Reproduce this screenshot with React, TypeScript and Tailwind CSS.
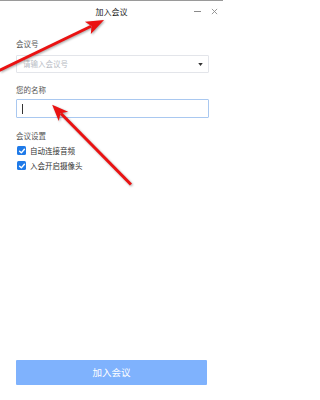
import React from 'react'

const FONT = { fontFamily: '"Noto Sans CJK SC", "Noto Sans", sans-serif' }

function CheckBox() {
  return (
    <span className="flex h-[9px] w-[9px] items-center justify-center rounded-[1.5px] bg-[#1f7ae8]">
      <svg viewBox="0 0 10 10" className="h-[8px] w-[8px]" fill="none" stroke="white" strokeWidth={1.8}>
        <path d="M2 5.2 4.2 7.3 8 2.8" strokeLinecap="round" strokeLinejoin="round" />
      </svg>
    </span>
  )
}

function Arrows() {
  return (
    <svg
      className="pointer-events-none absolute inset-0 h-full w-full drop-shadow-[1px_1px_1px_rgba(0,0,0,0.35)]"
      viewBox="0 0 223 400"
    >
      {/* arrow to the title */}
      <line x1={-6} y1={72} x2={91} y2={25.3} stroke="#ea1212" strokeWidth={3} />
      <polygon points="104,19 84.8,20.8 91.4,25.1 90.8,33" fill="#ea1212" />
      {/* arrow to the name field */}
      <line x1={131} y1={184} x2={60.8} y2={112.8} stroke="#ea1212" strokeWidth={3} />
      <polygon points="52,104 68,111 60.4,112.6 58.6,120.4" fill="#ea1212" />
    </svg>
  )
}

export default function App() {
  return (
    <div
      style={FONT}
      className="relative flex h-[400px] w-[223px] flex-col overflow-hidden border-t border-[#9a9a9a] bg-white"
    >
      {/* title bar */}
      <div className="grid h-[21px] grid-cols-[1fr_auto_1fr] items-center">
        <div />
        <span className="text-[8px] leading-none text-[#222]">加入会议</span>
        <div className="flex items-center justify-end gap-[10px] pr-[5px]">
          <span className="block h-px w-[7px] bg-[#8a8a8a]" />
          <svg viewBox="0 0 8 8" className="h-[7px] w-[7px]" stroke="#8a8a8a" strokeWidth={1}>
            <path d="M1 1 7 7M7 1 1 7" />
          </svg>
        </div>
      </div>

      <div className="flex flex-1 flex-col pl-[16px] pr-[14px]">
        <div className="mt-[17px] text-[7.5px] leading-[10px] text-[#555]">会议号</div>
        <div className="mt-[6px] flex h-[18px] items-center justify-between rounded-[1px] border border-[#e3e5ea] pl-[6px] pr-[5px]">
          <span className="text-[7.5px] text-[#b8bcc4]">请输入会议号</span>
          <svg viewBox="0 0 6 4" className="h-[3px] w-[5px]">
            <path d="M0 0h6L3 4z" fill="#333" />
          </svg>
        </div>

        <div className="mt-[12px] text-[7.5px] leading-[10px] text-[#555]">您的名称</div>
        <div className="mt-[4px] flex h-[19px] items-center rounded-[1px] border border-[#a9c8f0] pl-[5px]">
          <span className="block h-[10px] w-px bg-[#333]" />
        </div>

        <div className="mt-[13px] text-[7.5px] leading-[10px] text-[#555]">会议设置</div>
        <div className="mt-[5px] flex flex-col gap-[6px] pl-[1px]">
          <label className="flex h-[9px] items-center gap-[4px]">
            <CheckBox />
            <span className="text-[7.5px] leading-none text-[#333]">自动连接音频</span>
          </label>
          <label className="flex h-[9px] items-center gap-[4px]">
            <CheckBox />
            <span className="text-[7.5px] leading-none text-[#333]">入会开启摄像头</span>
          </label>
        </div>

        <div className="flex-1" />
        <button className="mb-[15px] mr-[2px] flex h-[25px] items-center justify-center rounded-[1px] bg-[#7fb2fd] text-[9.5px] text-white">
          加入会议
        </button>
      </div>

      <Arrows />
    </div>
  )
}
